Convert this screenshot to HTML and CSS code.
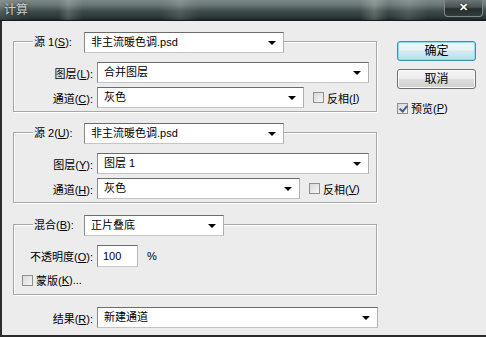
FILE: index.html
```html
<!DOCTYPE html>
<html>
<head>
<meta charset="utf-8">
<link rel="stylesheet" href="styles.css">
</head>
<body>
<div class="window">
  <div class="titlebar">
    <span class="title">计算</span>
    <div class="close">✕</div>
  </div>
  <div class="body">
    <div class="main">
      <div class="group g1">
        <div class="legend">
          <span class="lbl">源 1(<u>S</u>):</span>
          <div class="select w200">非主流暖色调.psd<i class="arrow"></i></div>
        </div>
        <div class="row">
          <span class="rlabel">图层(<u>L</u>):</span>
          <div class="select w272">合并图层<i class="arrow"></i></div>
        </div>
        <div class="row">
          <span class="rlabel">通道(<u>C</u>):</span>
          <div class="select w207">灰色<i class="arrow"></i></div>
          <span class="check inv"><i class="box"></i>反相(<u>I</u>)</span>
        </div>
      </div>

      <div class="group g2">
        <div class="legend">
          <span class="lbl">源 2(<u>U</u>):</span>
          <div class="select w200">非主流暖色调.psd<i class="arrow"></i></div>
        </div>
        <div class="row">
          <span class="rlabel">图层(<u>Y</u>):</span>
          <div class="select w272">图层 1<i class="arrow"></i></div>
        </div>
        <div class="row">
          <span class="rlabel">通道(<u>H</u>):</span>
          <div class="select w203">灰色<i class="arrow"></i></div>
          <span class="check inv"><i class="box"></i>反相(<u>V</u>)</span>
        </div>
      </div>

      <div class="group g3">
        <div class="legend">
          <span class="lbl">混合(<u>B</u>):</span>
          <div class="select w140">正片叠底<i class="arrow"></i></div>
        </div>
        <div class="row oprow">
          <span class="rlabel">不透明度(<u>O</u>):</span>
          <div class="input">100</div>
          <span class="pct">%</span>
        </div>
        <div class="mask">
          <span class="check"><i class="box"></i>蒙版(<u>K</u>)...</span>
        </div>
      </div>

      <div class="row result">
        <span class="rlabel">结果(<u>R</u>):</span>
        <div class="select w281">新建通道<i class="arrow"></i></div>
      </div>
    </div>

    <div class="side">
      <div class="btn ok">确定</div>
      <div class="btn cancel">取消</div>
      <span class="check preview"><i class="box checked"></i>预览(<u>P</u>)</span>
    </div>
  </div>
</div>
</body>
</html>
```

FILE: styles.css
```css
* { box-sizing: border-box; }
html, body { margin: 0; padding: 0; }
body {
  width: 486px;
  height: 337px;
  overflow: hidden;
  font-family: "Liberation Sans", "Noto Sans CJK SC", sans-serif;
  font-size: 11px;
  color: #000;
  background: #ececec;
}
u { text-decoration: underline; text-underline-offset: 1px; }

.window {
  width: 486px;
  height: 337px;
  display: flex;
  flex-direction: column;
  background: #ececec;
}

.titlebar {
  height: 21px;
  flex: none;
  display: flex;
  align-items: flex-start;
  justify-content: space-between;
  background:
    linear-gradient(to right,
      rgba(255,255,255,0.10) 0, rgba(255,255,255,0) 6%,
      rgba(255,255,255,0) 12%, rgba(255,255,255,0.16) 14%, rgba(255,255,255,0) 17%,
      rgba(255,255,255,0) 33%, rgba(255,255,255,0.12) 37%, rgba(255,255,255,0) 41%,
      rgba(255,255,255,0) 74%, rgba(255,255,255,0.20) 77%, rgba(255,255,255,0) 80%,
      rgba(255,255,255,0.12) 84%, rgba(255,255,255,0) 88%),
    linear-gradient(to bottom, #7a8785 0%, #697674 25%, #3e4c4b 55%, #2c3938 85%, #1c2525 100%);
  border-bottom: 1px solid #141b1b;
}
.title {
  margin: 3px 0 0 4px;
  color: #c7cfcf;
  font-size: 12px;
  line-height: 14px;
  text-shadow: 0 0 3px rgba(0,0,0,0.6);
}
.close {
  width: 39px;
  height: 17px;
  margin-right: 3px;
  border: 1px solid #7e8888;
  border-top: none;
  border-radius: 0 0 4px 4px;
  background: linear-gradient(to bottom, #6b7575 0%, #4a5353 45%, #252d2d 55%, #333b3b 100%);
  color: #fff;
  font-size: 11px;
  font-weight: bold;
  line-height: 15px;
  text-align: center;
  text-shadow: 0 0 2px #000;
}

.body {
  flex: 1;
  display: flex;
  border-left: 2px solid #2b2b2b;
  border-bottom: 2px solid #2b2b2b;
  padding-left: 11px;
}

.main {
  width: 366px;
  padding-top: 20px;
  display: flex;
  flex-direction: column;
}

.group {
  width: 364px;
  border: 1px solid #a7a7a7;
  box-shadow: inset 1px 1px 0 #fff, 1px 1px 0 #fff;
  padding: 0 0 3px 0;
  display: flex;
  flex-direction: column;
}
.g2 { margin-top: 20px; }
.g3 { margin-top: 21px; padding-bottom: 7px; }

.legend {
  display: flex;
  align-items: center;
  margin-top: -10px;
  margin-left: 19px;
  height: 21px;
}
.legend .lbl {
  width: 51px;
  padding-left: 1px;
  background: #ececec;
  line-height: 21px;
  white-space: nowrap;
}

.row {
  display: flex;
  align-items: center;
  height: 21px;
  margin-top: 4px;
}
.legend + .row { margin-top: 9px; }
.rlabel {
  width: 83px;
  padding-right: 4px;
  text-align: right;
  white-space: nowrap;
}
.result { margin-top: 12px; padding-left: 1px; }

.select {
  position: relative;
  height: 21px;
  background: #fff;
  border: 1px solid #8a8a8a;
  border-top-color: #6c6c6c;
  border-right-color: #b0b0b0;
  border-bottom-color: #c4c4c4;
  padding-left: 6px;
  line-height: 19px;
  white-space: nowrap;
}
.w200 { width: 200px; }
.w272 { width: 272px; }
.w207 { width: 207px; }
.w203 { width: 203px; }
.w140 { width: 140px; }
.w281 { width: 281px; }

.arrow {
  position: absolute;
  right: 7px;
  top: 8px;
  width: 0;
  height: 0;
  border-left: 4px solid transparent;
  border-right: 4px solid transparent;
  border-top: 4px solid #000;
}

.check {
  display: inline-flex;
  align-items: center;
  white-space: nowrap;
}
.check .box {
  width: 11px;
  height: 11px;
  margin-right: 3px;
  border: 1px solid #8e8f8f;
  background: linear-gradient(135deg, #d8d8d8, #f6f6f6);
  position: relative;
}
.box.checked::after {
  content: "";
  position: absolute;
  left: 3px;
  top: 0px;
  width: 3px;
  height: 6px;
  border: solid #4a5a8a;
  border-width: 0 2px 2px 0;
  transform: rotate(40deg);
}
.inv { margin-left: 9px; }

.oprow { height: 22px; margin-top: 9px; }
.input {
  width: 41px;
  height: 22px;
  background: #fff;
  border: 1px solid #8a8a8a;
  border-top-color: #6c6c6c;
  border-right-color: #b8b8b8;
  border-bottom-color: #c8c8c8;
  padding-left: 5px;
  line-height: 20px;
}
.pct { margin-left: 9px; }

.mask {
  margin-top: 6px;
  margin-left: 8px;
  height: 14px;
  display: flex;
  align-items: center;
}

.side {
  margin-left: 18px;
  padding-top: 20px;
  display: flex;
  flex-direction: column;
  align-items: flex-start;
}
.btn {
  width: 79px;
  height: 20px;
  border-radius: 3px;
  text-align: center;
  line-height: 18px;
  font-size: 12px;
}
.ok {
  border: 1px solid #3f8fa6;
  background: linear-gradient(to bottom, #eaf8fc 0%, #e4f3f8 45%, #f3dede 50%, #cdeaf2 55%, #b7e0ec 100%);
  box-shadow: inset 0 0 0 1px #8fdcee;
}
.cancel {
  margin-top: 8px;
  border: 1px solid #707070;
  background: linear-gradient(to bottom, #f4f4f4 0%, #ebebeb 48%, #dddddd 52%, #cfcfcf 100%);
  box-shadow: inset 0 0 0 1px #fbfbfb;
}
.preview { margin-top: 11px; }
```
